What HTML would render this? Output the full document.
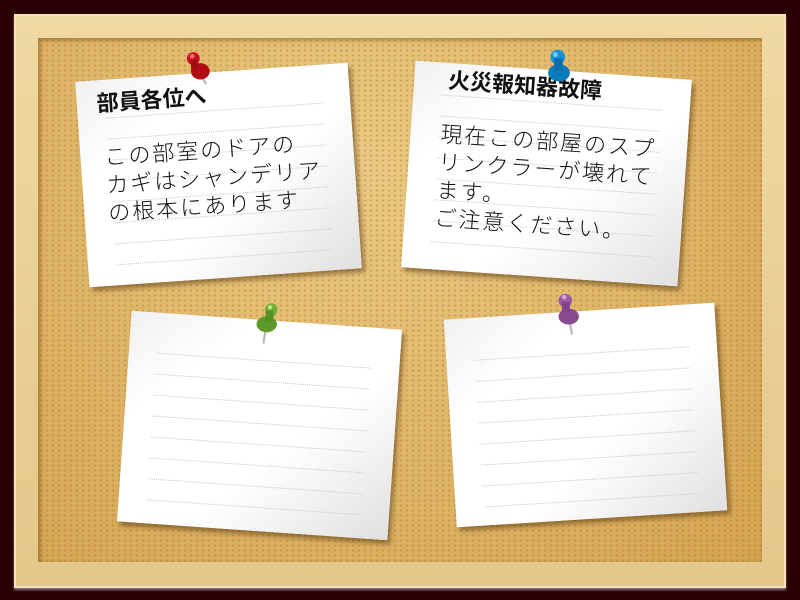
<!DOCTYPE html>
<html><head><meta charset="utf-8"><style>
html,body{margin:0;padding:0;}
body{width:800px;height:600px;background:#2a0005;position:relative;overflow:hidden;font-family:"Liberation Sans","Noto Sans CJK JP",sans-serif;}
.frame{position:absolute;left:14px;top:14px;width:772px;height:574px;background:linear-gradient(180deg,#efd9a2,#e3c68a);box-shadow:0 2px 2px rgba(200,200,220,.6), inset 0 0 0 2px #f5e4b8;}
.cork{position:absolute;left:38px;top:38px;width:724px;height:524px;box-shadow:inset 2px 2px 5px rgba(120,80,20,.6);
background-image:radial-gradient(rgba(180,105,40,.4) 1px,transparent 1.4px),radial-gradient(circle at 45% 25%,#e9c982,#dcb364 60%,#d2a450);background-size:6px 5px,100% 100%;}
.note{position:absolute;box-shadow:3px 4px 5px rgba(60,30,0,.45);
background-image:linear-gradient(140deg,#f0f0f0 0%,#fff 25%,#fff 60%,#e0e0e0 100%);}
.lines{position:absolute;left:28px;right:28px;}
.lines div{height:20px;border-bottom:1px dotted #c8c8c8;}
.t{position:absolute;font-weight:bold;font-size:22px;color:#111;}
.b{position:absolute;font-size:22px;line-height:28px;color:#111;font-weight:300;letter-spacing:2px;white-space:nowrap;}
.pin{position:absolute;}
</style></head><body>
<div class="frame"></div>
<div class="cork"></div>

<div class="note" style="left:82px;top:72px;width:273px;height:206px;transform:rotate(-4deg);">
 <div class="lines" style="top:18px"><div></div><div></div><div></div><div></div><div></div><div></div><div></div><div></div></div>
 <div class="t" style="left:20px;top:6px">部員各位へ</div>
 <div class="b" style="left:24px;top:64px">この部室のドアの<br>カギはシャンデリア<br>の根本にあります</div>
</div>

<div class="note" style="left:408px;top:70px;width:277px;height:207px;transform:rotate(4deg);">
 <div class="lines" style="top:12px"><div></div><div></div><div></div><div></div><div></div><div></div><div></div><div></div></div>
 <div class="t" style="left:34px;top:0px">火災報知器故障</div>
 <div class="b" style="left:30px;top:58px">現在この部屋のスプ<br>リンクラーが壊れて<br>ます。<br>ご注意ください。</div>
</div>

<div class="note" style="left:124px;top:320px;width:271px;height:211px;transform:rotate(4deg);">
 <div class="lines" style="top:20px"><div></div><div></div><div></div><div></div><div></div><div></div><div></div><div></div></div>
</div>

<div class="note" style="left:450px;top:311px;width:271px;height:208px;transform:rotate(-3.6deg);">
 <div class="lines" style="top:22px"><div></div><div></div><div></div><div></div><div></div><div></div><div></div><div></div></div>
</div>

<svg class="pin" style="left:180px;top:48px" width="36" height="42" viewBox="0 0 30 36">
 <line x1="17" y1="22" x2="22" y2="31" stroke="#bbb" stroke-width="2"/>
 <ellipse cx="17" cy="20" rx="8" ry="7" fill="#b10d14"/><ellipse cx="11" cy="9" rx="5.5" ry="5.5" fill="#c8141c"/><rect x="9" y="10" width="6" height="8" fill="#a40c12"/><circle cx="10" cy="7" r="2" fill="#f07070"/></svg>
<svg class="pin" style="left:542px;top:46px" width="34" height="44" viewBox="0 0 28 36">
 <ellipse cx="14" cy="22" rx="9" ry="7" fill="#0b7bc0"/><ellipse cx="13" cy="9" rx="6" ry="6" fill="#1590d4"/><rect x="10" y="10" width="7" height="10" fill="#0a6fae"/><circle cx="11" cy="7" r="2" fill="#7cc8f0"/></svg>
<svg class="pin" style="left:252px;top:298px" width="34" height="48" viewBox="0 0 30 42">
 <line x1="12" y1="28" x2="10" y2="40" stroke="#bbb" stroke-width="2"/>
 <ellipse cx="13" cy="23" rx="9" ry="7" fill="#5d9a2a"/><ellipse cx="17" cy="10" rx="5.5" ry="5.5" fill="#6fae34"/><rect x="12" y="11" width="7" height="9" fill="#54902a"/><circle cx="16" cy="8" r="2" fill="#b8e08a"/></svg>
<svg class="pin" style="left:554px;top:288px" width="34" height="48" viewBox="0 0 30 42">
 <line x1="14" y1="30" x2="16" y2="41" stroke="#bbb" stroke-width="2"/>
 <ellipse cx="13" cy="25" rx="9" ry="7" fill="#8a4a90"/><ellipse cx="10" cy="11" rx="6" ry="6" fill="#9c5aa2"/><rect x="7" y="12" width="7" height="10" fill="#84448a"/><circle cx="9" cy="8" r="2" fill="#d9a8dc"/></svg>
</body></html>
